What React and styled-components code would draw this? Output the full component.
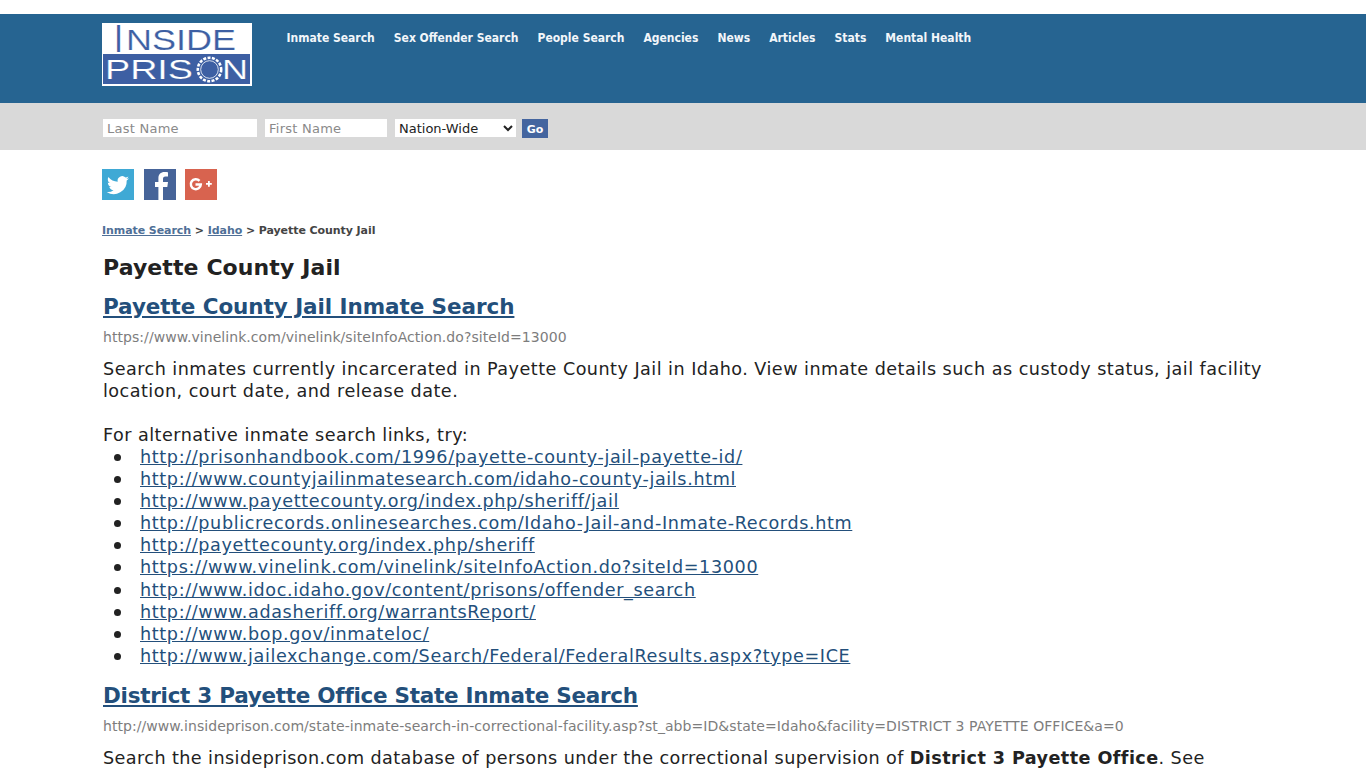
import React from "react";
import styled, { createGlobalStyle } from "styled-components";

const Global = createGlobalStyle`
  html, body { margin: 0; padding: 0; background: #fff; overflow: hidden; height: 768px; }
  body { font-family: "DejaVu Sans", Verdana, sans-serif; color: #222; }
`;
const Container = styled.div`
  width: 1175px;
  margin-left: 102px;
`;
const Header = styled.header`
  margin-top: 14px;
  height: 89px;
  background: #266491;
`;
const HeaderInner = styled(Container)`
  display: flex;
  align-items: flex-start;
  padding-top: 9px;
`;
const LogoBox = styled.a`
  display: block;
  width: 150px;
  height: 63px;
  flex: none;
`;
const LogoSvg = styled.svg`
  display: block;
  overflow: visible;
`;
const Nav = styled.nav`
  display: flex;
  gap: 19px;
  margin-left: 34.5px;
  padding-top: 8px;
`;
const NavLink = styled.a`
  font-family: "DejaVu Sans Condensed", "DejaVu Sans", sans-serif;
  font-size: 12px;
  font-weight: 700;
  line-height: 15px;
  color: #f2f6fa;
  text-decoration: none;
`;
const SearchBar = styled.div`
  height: 47px;
  background: #d9d9d9;
`;
const SearchForm = styled(Container)`
  display: flex;
  align-items: flex-start;
  padding: 16px 0 0 1px;
`;
const TextInput = styled.input`
  box-sizing: border-box;
  width: ${(p) => p.$w}px;
  height: 18px;
  margin: 0 8px 0 0;
  padding: 0 4px;
  border: 0;
  background: #fff;
  font-family: inherit;
  font-size: 13px;
  letter-spacing: 0.25px;
  &::placeholder { color: #8a8a8a; opacity: 1; }
`;
const Select = styled.select`
  box-sizing: border-box;
  width: 121px;
  height: 18px;
  margin: 0 6px 0 0;
  padding: 0;
  border: 0;
  background: #fff;
  font-family: inherit;
  font-size: 13px;
  color: #222;
`;
const GoButton = styled.button`
  width: 26px;
  height: 19px;
  padding: 1px 0 0;
  border: 0;
  background: #44659f;
  color: #fff;
  font-family: inherit;
  font-size: 11px;
  font-weight: 700;
`;
const Socials = styled.div`
  display: flex;
  margin-top: 19px;
`;
const Social = styled.a`
  display: block;
  width: 32px;
  height: 31px;
  margin-right: ${(p) => p.$gap}px;
  background: ${(p) => p.$bg};
  overflow: hidden;
`;
const Crumbs = styled.div`
  margin-top: 23px;
  font-size: 11px;
  letter-spacing: -0.07px;
  font-weight: 700;
  line-height: 16px;
  color: #444;
`;
const CrumbLink = styled.a`
  color: #4f6f97;
  text-decoration: underline;
`;
const Title = styled.h1`
  margin: 16px 0 0 1px;
  font-size: 22px;
  letter-spacing: 0.1px;
  line-height: 26px;
  font-weight: 700;
  color: #222;
`;
const ResultTitle = styled.h2`
  margin: ${(p) => p.$top}px 0 0 1px;
  font-size: 21.5px;
  letter-spacing: ${(p) => p.$ls}px;
  line-height: 26px;
  font-weight: 700;
  a { color: #234f7b; text-decoration: underline; }
`;
const Url = styled.div`
  margin: 8px 0 0 1px;
  font-size: 14px;
  letter-spacing: 0.06px;
  line-height: 18px;
  color: #7d7d7d;
`;
const Para = styled.p`
  margin: 12px 0 0 1px;
  font-size: 17.6px;
  line-height: 22px;
  color: #222;
  letter-spacing: ${(p) => p.$ls}px;
`;
const Links = styled.ul`
  margin: 0;
  padding: 0 0 0 38px;
  list-style: none;
  font-size: 17.6px;
  letter-spacing: 0.63px;
  line-height: 22.1px;
  a { color: #234f7b; text-decoration: underline; }
`;
const LinkItem = styled.li`
  position: relative;
  &::before {
    content: "";
    position: absolute;
    left: -26px;
    top: 8px;
    width: 7px;
    height: 7px;
    border-radius: 50%;
    background: #222;
  }
`;

const Logo = () => (
  <LogoSvg width="150" height="63" viewBox="0 0 150 63">
    <rect width="150" height="63" fill="#fff" />
    <rect x="1" y="31" width="147" height="30" fill="#3d5fa3" />
    <g fontFamily="Liberation Sans" fill="#3d5fa3" stroke="#fff" strokeWidth="0.2">
      <text x="12" y="29" fontSize="39" textLength="9" lengthAdjust="spacingAndGlyphs">I</text>
      <text x="24" y="27" fontSize="30" textLength="110" lengthAdjust="spacingAndGlyphs">NSIDE</text>
    </g>
    <g fontFamily="Liberation Sans" fontSize="28" fill="#fff" stroke="#3d5fa3" strokeWidth="0.2">
      <text x="3" y="56" textLength="88" lengthAdjust="spacingAndGlyphs">PRIS</text>
      <text x="120" y="56" textLength="26" lengthAdjust="spacingAndGlyphs">N</text>
    </g>
    <circle cx="107.500" cy="46.500" r="11.700" fill="none" stroke="#fff" strokeWidth="2.600" strokeDasharray="3 1.400" />
    <circle cx="107.500" cy="46.500" r="8.800" fill="none" stroke="#fff" strokeWidth="0.800" />
  </LogoSvg>
);

const urls = [
  "http://prisonhandbook.com/1996/payette-county-jail-payette-id/",
  "http://www.countyjailinmatesearch.com/idaho-county-jails.html",
  "http://www.payettecounty.org/index.php/sheriff/jail",
  "http://publicrecords.onlinesearches.com/Idaho-Jail-and-Inmate-Records.htm",
  "http://payettecounty.org/index.php/sheriff",
  "https://www.vinelink.com/vinelink/siteInfoAction.do?siteId=13000",
  "http://www.idoc.idaho.gov/content/prisons/offender_search",
  "http://www.adasheriff.org/warrantsReport/",
  "http://www.bop.gov/inmateloc/",
  "http://www.jailexchange.com/Search/Federal/FederalResults.aspx?type=ICE",
];
const nav = ["Inmate Search", "Sex Offender Search", "People Search", "Agencies", "News", "Articles", "Stats", "Mental Health"];

export default function App() {
  return (
    <>
      <Global />
      <Header>
        <HeaderInner>
          <LogoBox href="#"><Logo /></LogoBox>
          <Nav>{nav.map((n) => <NavLink href="#" key={n}>{n}</NavLink>)}</Nav>
        </HeaderInner>
      </Header>
      <SearchBar>
        <SearchForm>
          <TextInput $w={154} placeholder="Last Name" />
          <TextInput $w={122} placeholder="First Name" />
          <Select defaultValue="n"><option value="n">Nation-Wide</option></Select>
          <GoButton>Go</GoButton>
        </SearchForm>
      </SearchBar>
      <Container>
        <Socials>
          <Social href="#" $bg="#3fa9d5" $gap={10}>
            <svg width="32" height="31" viewBox="0 0 32 31"><path fill="#fff" d="M27 9.2c-.8.4-1.700.6-2.600.7.900-.6 1.600-1.400 2-2.500-.9.5-1.900.9-2.900 1.100a4.600 4.600 0 0 0-7.800 4.200C12 12.500 8.600 10.700 6.400 7.900c-1.200 2.100-.6 4.800 1.400 6.100-.7 0-1.400-.2-2-.6 0 2.200 1.500 4.100 3.600 4.500-.7.200-1.400.2-2.100.1.600 1.800 2.300 3.100 4.200 3.200A9.200 9.200 0 0 1 4.700 23a13 13 0 0 0 20-11.600c.9-.6 1.700-1.400 2.300-2.200z"/></svg>
          </Social>
          <Social href="#" $bg="#466499" $gap={9}>
            <svg width="32" height="31" viewBox="0 0 32 31"><path fill="#fff" d="M19 31V18h4.300l.7-5h-5v-3c0-1.500.5-2.400 2.500-2.400H24V3.200C23.500 3.100 22 3 20.400 3c-3.500 0-6 2.200-6 6.100V13H11v5h3.400v13z"/></svg>
          </Social>
          <Social href="#" $bg="#d8634f" $gap={0}>
            <svg width="32" height="31" viewBox="0 0 32 31"><path fill="none" stroke="#fff" strokeWidth="2.500" d="M14.500 11.800a5 5 0 1 0 1.300 3.600H10.500"/><path fill="#fff" d="M21 14h2v-2h1.800v2h2v1.800h-2v2H23v-2h-2z"/></svg>
          </Social>
        </Socials>
        <Crumbs>
          <CrumbLink href="#">Inmate Search</CrumbLink> &gt; <CrumbLink href="#">Idaho</CrumbLink> &gt; Payette County Jail
        </Crumbs>
        <Title>Payette County Jail</Title>
        <ResultTitle $top={13} $ls={-0.07}><a href="#">Payette County Jail Inmate Search</a></ResultTitle>
        <Url>https://www.vinelink.com/vinelink/siteInfoAction.do?siteId=13000</Url>
        <Para $ls={0.47}>
          Search inmates currently incarcerated in Payette County Jail in Idaho. View inmate details such as custody status, jail facility location, court date, and release date.
          <br /><br />
          For alternative inmate search links, try:
        </Para>
        <Links>
          {urls.map((u) => <LinkItem key={u}><a href="#">{u}</a></LinkItem>)}
        </Links>
        <ResultTitle $top={16} $ls={-0.27}><a href="#">District 3 Payette Office State Inmate Search</a></ResultTitle>
        <Url>http://www.insideprison.com/state-inmate-search-in-correctional-facility.asp?st_abb=ID&amp;state=Idaho&amp;facility=DISTRICT 3 PAYETTE OFFICE&amp;a=0</Url>
        <Para $ls={0.42}>
          Search the insideprison.com database of persons under the correctional supervision of <b>District 3 Payette Office</b>. See
        </Para>
      </Container>
    </>
  );
}
